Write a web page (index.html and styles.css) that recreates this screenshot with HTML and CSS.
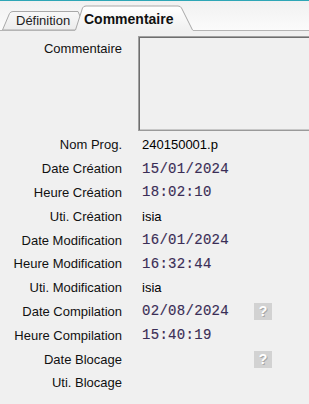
FILE: index.html
```html
<!DOCTYPE html>
<html lang="fr">
<head>
    <meta charset="UTF-8">
    <meta name="viewport" content="width=device-width, initial-scale=1.0">
    <title>Commentaire</title>
    <link rel="stylesheet" href="styles.css">
</head>
<body>

    <div class="tabs">
        <div class="tab">
            <svg class="tab-shape" width="84" height="19" viewBox="0 0 84 19">
                <defs>
                    <linearGradient id="gInactive" x1="0" y1="0" x2="0" y2="1">
                        <stop offset="0" stop-color="#f8f8f8"/>
                        <stop offset="1" stop-color="#ececec"/>
                    </linearGradient>
                </defs>
                <path d="M0.5,19 L7.5,2.5 Q8.5,0.5 11,0.5 L76,0.5 L84,19 Z" fill="url(#gInactive)" stroke="#a8a8a8"/>
            </svg>
            <span class="tab-text">Définition</span>
        </div>
        <div class="tab active">
            <svg class="tab-shape" width="120" height="26" viewBox="0 0 120 26">
                <defs>
                    <linearGradient id="gActive" x1="0" y1="0" x2="0" y2="1">
                        <stop offset="0" stop-color="#ffffff"/>
                        <stop offset="1" stop-color="#f0f0f0"/>
                    </linearGradient>
                </defs>
                <path d="M1,26 L1.5,25 L8.5,3 Q9.5,1 12,1 L104,1 Q106.5,1 107.5,3 L118.5,25 L119,26 Z" fill="url(#gActive)"/>
                <path d="M1.5,25 L8.5,3 Q9.5,1 12,1 L104,1 Q106.5,1 107.5,3 L118.5,25" fill="none" stroke="#a8a8a8"/>
            </svg>
            <span class="tab-text">Commentaire</span>
        </div>
    </div>

    <div class="panel">
        <div class="comment-row">
            <span class="label comment-label">Commentaire</span>
            <div class="comment-box"></div>
        </div>

        <div class="fields">
            <div class="row"><span class="label">Nom Prog.</span><span class="value">240150001.p</span></div>
            <div class="row"><span class="label">Date Création</span><span class="value mono">15/01/2024</span></div>
            <div class="row"><span class="label">Heure Création</span><span class="value mono">18:02:10</span></div>
            <div class="row"><span class="label">Uti. Création</span><span class="value">isia</span></div>
            <div class="row"><span class="label">Date Modification</span><span class="value mono">16/01/2024</span></div>
            <div class="row"><span class="label">Heure Modification</span><span class="value mono">16:32:44</span></div>
            <div class="row"><span class="label">Uti. Modification</span><span class="value">isia</span></div>
            <div class="row"><span class="label">Date Compilation</span><span class="value mono">02/08/2024</span><span class="help">?</span></div>
            <div class="row"><span class="label">Heure Compilation</span><span class="value mono">15:40:19</span></div>
            <div class="row"><span class="label">Date Blocage</span><span class="value mono"></span><span class="help">?</span></div>
            <div class="row"><span class="label">Uti. Blocage</span><span class="value"></span></div>
        </div>
    </div>

</body>
</html>
```

FILE: styles.css
```css
body {
    margin: 0;
    background-color: #f0f0f0;
    font-family: "Liberation Sans", Arial, sans-serif;
    font-size: 13px;
    color: #111;
}

/* barre des onglets */
.tabs {
    display: flex;
    align-items: flex-end;
    height: 29px;
    border-top: 1px solid #2ea6b6;
    border-bottom: 1px solid #b4b4b4;
    background: linear-gradient(#f1f1f1, #fbfbfb);
}

.tab {
    position: relative;
    display: flex;
    align-items: center;
    margin-bottom: -1px;
}

.tab:first-child {
    width: 84px;
    height: 19px;
    margin-left: 2px;
    margin-bottom: 0;
}

.tab.active {
    width: 120px;
    height: 26px;
    margin-left: -12px;
    z-index: 1;
}

.tab-shape {
    position: absolute;
    left: 0;
    top: 0;
}

.tab-text {
    position: relative;
    color: #222;
    padding-left: 14px;
}

.tab.active .tab-text {
    font-weight: bold;
    font-size: 14px;
    color: #111;
    padding-left: 10px;
    padding-top: 1px;
}

/* contenu */
.panel {
    padding-top: 5px;
}

.comment-row {
    display: flex;
    height: 95px;
}

.label {
    width: 122px;
    flex-shrink: 0;
    text-align: right;
    white-space: nowrap;
}

.comment-label {
    padding-top: 5px;
}

.comment-box {
    flex: 1;
    margin-left: 16px;
    margin-right: -1px;
    border: 1px solid #a0a0a0;
    border-right-color: #dcdcdc;
    border-bottom-color: #9a9a9a;
    box-shadow: inset 1px 1px 0 #6e6e6e, inset 0 -1px 0 #c8c8c8;
    background-color: #f0f0f0;
}

.fields {
    padding-top: 2px;
}

.row {
    display: flex;
    align-items: center;
    height: 23.8px;
}

.value {
    width: 112px;
    margin-left: 16px;
    padding-left: 4px;
    color: #000;
    white-space: nowrap;
}

.mono {
    font-family: "Liberation Mono", "Courier New", monospace;
    font-size: 14px;
    letter-spacing: 0.3px;
    color: #3a2d56;
    -webkit-text-stroke: 0.15px #3a2d56;
}

.help {
    width: 18px;
    height: 17px;
    background-color: #d2d2d2;
    color: #ffffff;
    font-weight: bold;
    font-size: 14px;
    text-align: center;
    line-height: 17px;
    text-shadow: 1px 1px 0 #a8a8a8;
}
```
